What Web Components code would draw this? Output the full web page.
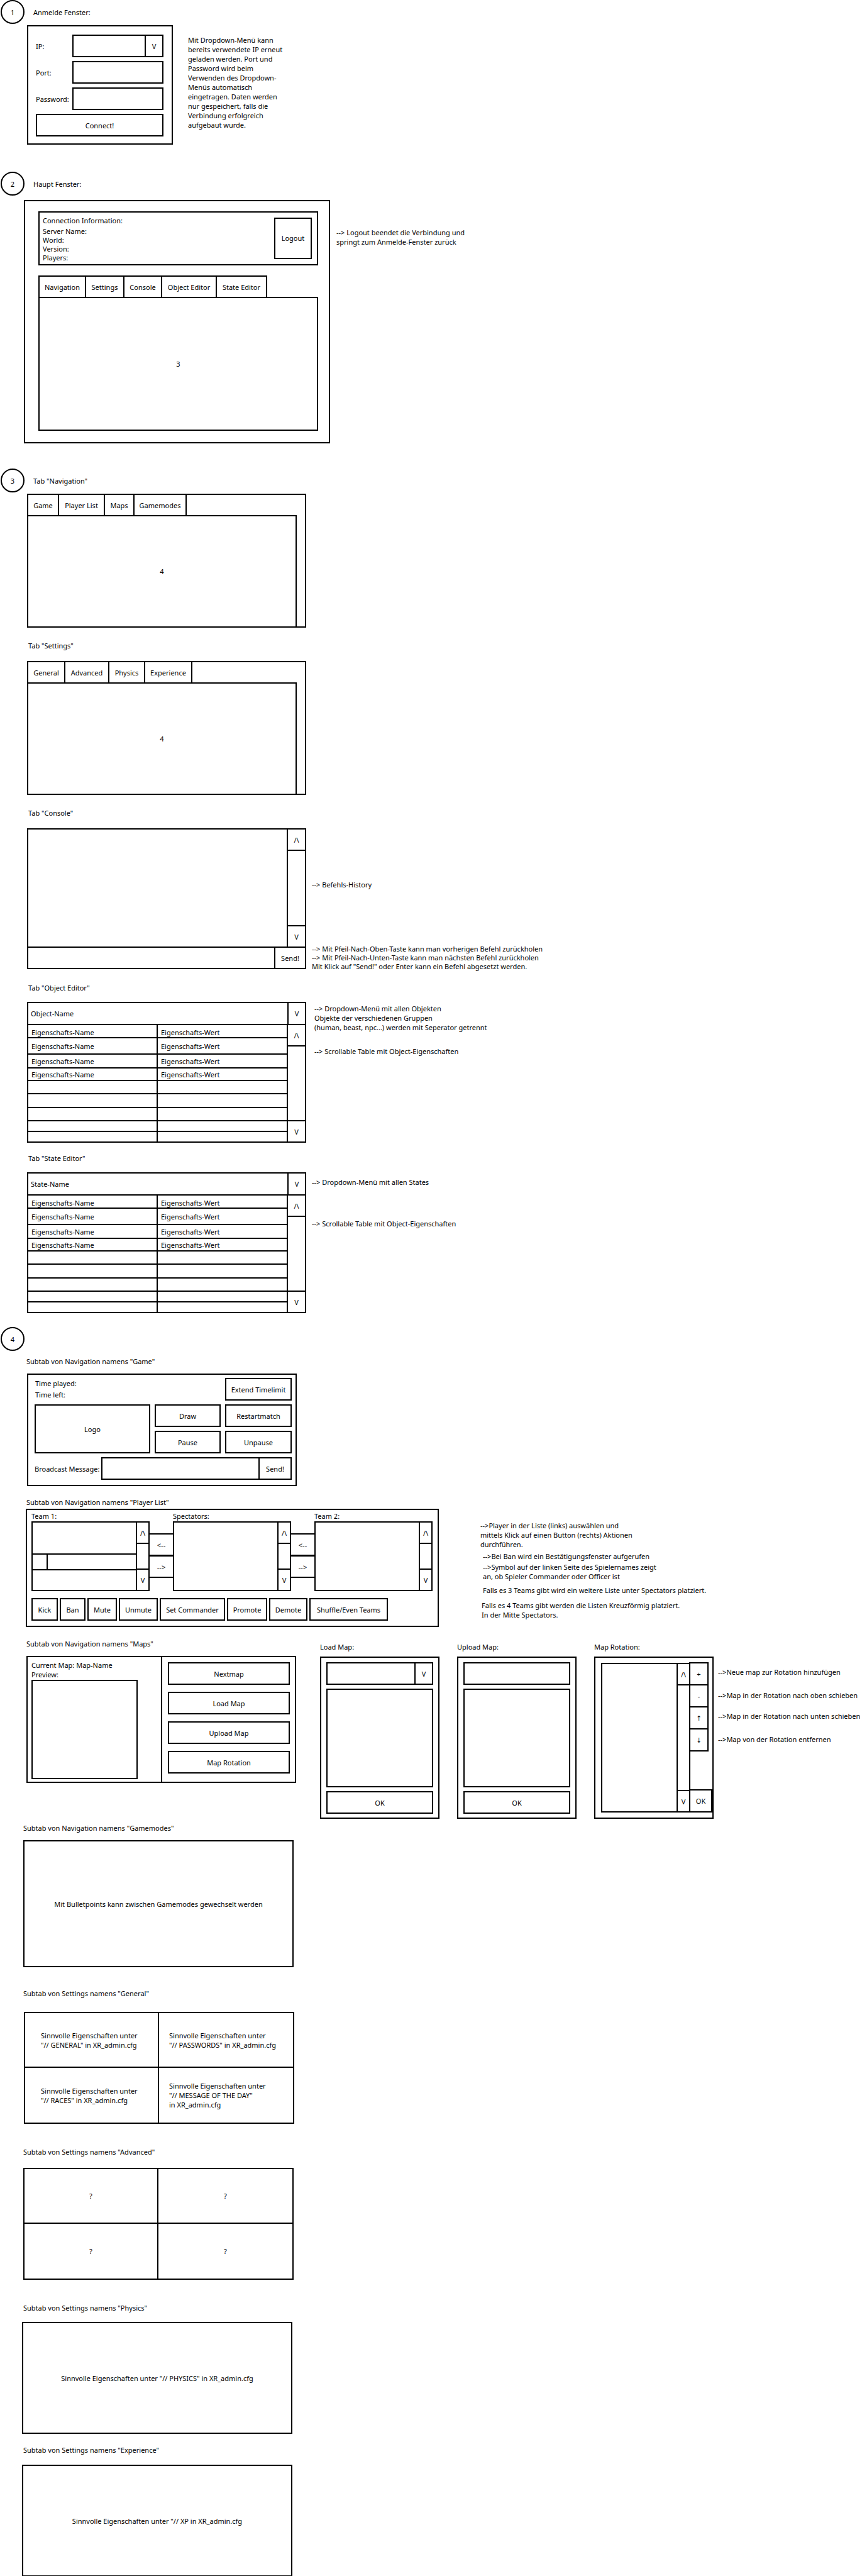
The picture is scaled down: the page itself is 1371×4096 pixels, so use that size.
<!DOCTYPE html>
<html lang="de">
<head>
<meta charset="utf-8">
<title>Admin-Tool Skizze</title>
<style>
  body { margin: 0; padding-bottom: 1px; background: #fff; color: #000;
         font: 11px/15px "Noto Sans", "DejaVu Sans Condensed", sans-serif; }
  .row { display: flex; align-items: flex-start; }
  .notes { display: flex; flex-direction: column; }

  #s2 { margin-top: 43px; }
  #s3 { margin-top: 40px; }
  #s4 { margin-top: 22px; }
  #login { margin: 2px 0 0 43px; gap: 24px; }
  #login .notes { padding-top: 16px; }
  #main { margin: 7px 0 0 38px; gap: 10px; }
  #main .notes { padding-top: 44px; }

  .tab { margin-left: 43px; }
  .tab > .row { gap: 9px; }
  .tab > wire-title { margin-left: 2px; }
  #navigation { margin-top: 2px; }
  #settings, #console { margin-top: 21px; }
  #settings > .row, #console > .row { margin-top: 17px; }
  #console .notes { padding-top: 82px; gap: 88px; }
  #object { margin-top: 19px; }
  #object > .row { margin-top: 15px; gap: 13px; }
  #object .notes { padding-top: 3px; gap: 23px; }
  #state { margin-top: 17px; }
  #state > .row { margin-top: 15px; }
  #state .notes { padding-top: 8px; gap: 51px; }

  .sub { margin-left: 42px; }
  #game { margin-top: 9px; }
  #game > game-tab { margin: 12px 0 0 1px; }
  #players { margin-top: 18px; }
  #players > .row { margin: 3px 0 0 -1px; gap: 66px; }
  #players .notes { padding-top: 19px; }
  .i2 { margin-left: 2px; }
  .i4 { margin-left: 4px; }
  #maps { margin-top: 19px; }
  #maps maps-tab { margin-top: 12px; }
  .dialog { margin: 5px 0 0 28px; }
  .dialog > :last-child { margin-top: 8px; }
  .dialog.first { margin-left: 38px; }
  #maps .notes { padding: 45px 0 0 7px; }

  .set { margin-left: 37px; }
  #gamemodes { margin-top: 7px; }
  #gamemodes wire-panel { margin-top: 12px; min-height: 202px; }
  #general { margin-top: 34px; --pad-a: 25px; --pad-b: 16px; }
  #general wire-quad { margin: 22px 0 0 1px; }
  #advanced { margin-top: 37px; }
  #advanced wire-quad { margin-top: 18px; }
  #physics { margin-top: 37px; }
  #physics wire-panel { margin: 15px 0 0 -2px; }
  #experience { margin-top: 18px; }
  #experience wire-panel { margin: 16px 0 0 -2px; }
</style>
</head>
<body>
<wire-step id="s1" number="1">Anmelde Fenster:</wire-step>
<div id="login" class="row">
  <login-window></login-window>
  <div class="notes"><wire-note>Mit Dropdown-Menü kann<br>bereits verwendete IP erneut<br>geladen werden. Port und<br>Password wird beim<br>Verwenden des Dropdown-<br>Menüs automatisch<br>eingetragen. Daten werden<br>nur gespeichert, falls die<br>Verbindung erfolgreich<br>aufgebaut wurde.</wire-note></div>
</div>

<wire-step id="s2" number="2">Haupt Fenster:</wire-step>
<div id="main" class="row">
  <main-window></main-window>
  <div class="notes"><wire-note>--&gt; Logout beendet die Verbindung und<br>springt zum Anmelde-Fenster zurück</wire-note></div>
</div>

<wire-step id="s3" number="3">Tab "Navigation"</wire-step>
<div id="navigation" class="tab"><tab-window tabs="Game:51,Player List:75,Maps:49,Gamemodes:85">4</tab-window></div>

<div id="settings" class="tab">
  <wire-title>Tab "Settings"</wire-title>
  <div class="row"><tab-window tabs="General:61,Advanced:72,Physics:59,Experience:77">4</tab-window></div>
</div>

<div id="console" class="tab">
  <wire-title>Tab "Console"</wire-title>
  <div class="row">
    <console-tab></console-tab>
    <div class="notes">
      <wire-note>--&gt; Befehls-History</wire-note>
      <wire-note dense>--&gt; Mit Pfeil-Nach-Oben-Taste kann man vorherigen Befehl zurückholen<br>--&gt; Mit Pfeil-Nach-Unten-Taste kann man nächsten Befehl zurückholen<br>Mit Klick auf "Send!" oder Enter kann ein Befehl abgesetzt werden.</wire-note>
    </div>
  </div>
</div>

<div id="object" class="tab">
  <wire-title>Tab "Object Editor"</wire-title>
  <div class="row">
    <property-editor name="Object-Name"></property-editor>
    <div class="notes">
      <wire-note>--&gt; Dropdown-Menü mit allen Objekten<br>Objekte der verschiedenen Gruppen<br>(human, beast, npc...) werden mit Seperator getrennt</wire-note>
      <wire-note>--&gt; Scrollable Table mit Object-Eigenschaften</wire-note>
    </div>
  </div>
</div>

<div id="state" class="tab">
  <wire-title>Tab "State Editor"</wire-title>
  <div class="row">
    <property-editor name="State-Name"></property-editor>
    <div class="notes">
      <wire-note>--&gt; Dropdown-Menü mit allen States</wire-note>
      <wire-note>--&gt; Scrollable Table mit Object-Eigenschaften</wire-note>
    </div>
  </div>
</div>

<wire-step id="s4" number="4"></wire-step>
<div id="game" class="sub">
  <wire-title>Subtab von Navigation namens "Game"</wire-title>
  <game-tab></game-tab>
</div>

<div id="players" class="sub">
  <wire-title>Subtab von Navigation namens "Player List"</wire-title>
  <div class="row">
    <players-tab></players-tab>
    <div class="notes">
      <wire-note>--&gt;Player in der Liste (links) auswählen und<br>mittels Klick auf einen Button (rechts) Aktionen<br>durchführen.</wire-note>
      <wire-note class="i4" style="margin-top:4px">--&gt;Bei Ban wird ein Bestätigungsfenster aufgerufen</wire-note>
      <wire-note class="i4" style="margin-top:2px">--&gt;Symbol auf der linken Seite des Spielernames zeigt<br>an, ob Spieler Commander oder Officer ist</wire-note>
      <wire-note class="i4" style="margin-top:7px">Falls es 3 Teams gibt wird ein weitere Liste unter Spectators platziert.</wire-note>
      <wire-note class="i2" style="margin-top:9px">Falls es 4 Teams gibt werden die Listen Kreuzförmig platziert.<br>In der Mitte Spectators.</wire-note>
    </div>
  </div>
</div>

<div id="maps" class="sub row">
  <div>
    <wire-title>Subtab von Navigation namens "Maps"</wire-title>
    <maps-tab></maps-tab>
  </div>
  <div class="dialog first"><wire-title>Load Map:</wire-title><map-dialog kind="select"></map-dialog></div>
  <div class="dialog"><wire-title>Upload Map:</wire-title><map-dialog kind="text"></map-dialog></div>
  <div class="dialog"><wire-title>Map Rotation:</wire-title><rotation-dialog></rotation-dialog></div>
  <div class="notes">
    <wire-note>--&gt;Neue map zur Rotation hinzufügen</wire-note>
    <wire-note style="margin-top:22px">--&gt;Map in der Rotation nach oben schieben</wire-note>
    <wire-note style="margin-top:18px">--&gt;Map in der Rotation nach unten schieben</wire-note>
    <wire-note style="margin-top:22px">--&gt;Map von der Rotation entfernen</wire-note>
  </div>
</div>

<div id="gamemodes" class="set">
  <wire-title>Subtab von Navigation namens "Gamemodes"</wire-title>
  <wire-panel>Mit Bulletpoints kann zwischen Gamemodes gewechselt werden</wire-panel>
</div>
<div id="general" class="set">
  <wire-title>Subtab von Settings namens "General"</wire-title>
  <wire-quad align="start">
    <span slot="a">Sinnvolle Eigenschaften unter<br>"// GENERAL" in XR_admin.cfg</span>
    <span slot="b">Sinnvolle Eigenschaften unter<br>"// PASSWORDS" in XR_admin.cfg</span>
    <span slot="c">Sinnvolle Eigenschaften unter<br>"// RACES" in XR_admin.cfg</span>
    <span slot="d">Sinnvolle Eigenschaften unter<br>"// MESSAGE OF THE DAY"<br>in XR_admin.cfg</span>
  </wire-quad>
</div>
<div id="advanced" class="set">
  <wire-title>Subtab von Settings namens "Advanced"</wire-title>
  <wire-quad>
    <span slot="a">?</span><span slot="b">?</span><span slot="c">?</span><span slot="d">?</span>
  </wire-quad>
</div>
<div id="physics" class="set">
  <wire-title>Subtab von Settings namens "Physics"</wire-title>
  <wire-panel>Sinnvolle Eigenschaften unter "// PHYSICS" in XR_admin.cfg</wire-panel>
</div>
<div id="experience" class="set">
  <wire-title>Subtab von Settings namens "Experience"</wire-title>
  <wire-panel>Sinnvolle Eigenschaften unter "// XP in XR_admin.cfg</wire-panel>
</div>

<script>
const BASE = `
  :host { display: block; box-sizing: border-box; max-width: 100%; }
  *, *::before, *::after { box-sizing: border-box; }
  button, input, select, textarea { font: inherit; color: inherit; background: #fff; border: 2px solid #000;
    border-radius: 0; margin: 0; padding: 0; min-width: 0; height: 36px; appearance: none; outline: 0; resize: none; display: block; }
  button { text-align: center; white-space: nowrap; }
  .frame { border: 2px solid #000; background: #fff; }
  .flex { display: flex; }
`;
function define(name, css, html) {
  customElements.define(name, class extends HTMLElement {
    constructor() {
      super();
      this.attachShadow({ mode: "open" });
    }
    connectedCallback() {
      const body = typeof html === "function" ? html(this) : html;
      const t = document.createElement("template");
      t.innerHTML = "<style>" + BASE + css + "</style>" + body;
      this.shadowRoot.replaceChildren(t.content.cloneNode(true));
    }
  });
}
/* "Label:width,Label:width" to a row of buttons */
function buttons(list, role) {
  return list.split(",").map(item => {
    const [text, width] = item.split(":");
    return `<button type="button"${role ? ` role="${role}"` : ""} style="flex:0 1 ${width}px">${text}</button>`;
  }).join("");
}

/* Text blocks */
define("wire-title", `:host { white-space: nowrap; }`, `<slot></slot>`);
define("wire-note", `:host { white-space: nowrap; } :host([dense]) { line-height: 14px; }`, `<slot></slot>`);
define("wire-step", `
  :host { display: flex; align-items: center; gap: 14px; padding-left: 1px; }
  b { font-weight: normal; width: 38px; height: 38px; border: 2px solid #000; border-radius: 50%;
      display: flex; align-items: center; justify-content: center; }`,
  el => `<b>${el.getAttribute("number")}</b><span><slot></slot></span>`);

/* Scroll bar with its two arrow buttons */
define("wire-scroll", `
  :host { display: flex; flex-direction: column; justify-content: space-between; width: 29px; border-left: 2px solid #000; flex: none; }
  :host([narrow]) { width: 20px; }
  button { height: 34px; border-width: 0 0 2px; width: 100%; }
  button + button { border-width: 2px 0 0; }`,
  `<button type="button">/\\</button><button type="button">V</button>`);

/* Drop-down with its V cell */
define("wire-select", `
  label { display: flex; height: 36px; border: 2px solid #000; }
  :host([bare]) label { border: 0; height: 33px; }
  select { flex: 1; height: auto; border: 0; padding-left: 4px; }
  span { width: 28px; border-left: 2px solid #000; display: flex; align-items: center; justify-content: center; }`,
  el => `<label><select aria-label="${el.getAttribute("label")}"><option>${el.getAttribute("value") || ""}</option></select><span>V</span></label>`);

define("wire-tabs", `
  :host { display: flex; }
  button + button { margin-left: -2px; }`,
  el => buttons(el.getAttribute("tabs"), "tab"));

define("wire-panel", `
  :host { display: flex; align-items: center; justify-content: center; border: 2px solid #000; width: 430px; min-height: 178px; }`,
  `<slot></slot>`);

define("wire-quad", `
  :host { display: grid; grid-template-columns: 1fr 1fr; grid-template-rows: 1fr 1fr; border: 2px solid #000; width: 430px; min-height: 178px; }
  div { display: flex; align-items: center; justify-content: center; }
  :host([align]) div { justify-content: flex-start; padding-left: var(--pad-a); }
  :host([align]) div:nth-of-type(even) { padding-left: var(--pad-b); }
  div:nth-of-type(odd) { border-right: 2px solid #000; }
  div:nth-of-type(-n+2) { border-bottom: 2px solid #000; }`,
  `<div><slot name="a"></slot></div><div><slot name="b"></slot></div><div><slot name="c"></slot></div><div><slot name="d"></slot></div>`);

/* 1: login */
define("login-window", `
  :host { width: 232px; }
  form { display: grid; grid-template-columns: 58px 1fr; gap: 6px 0; align-items: center; padding: 13px 13px 11px 12px; }
  input { width: 100%; padding: 0 4px; }
  button { grid-column: 1 / -1; }`,
  `<form class="frame">
    <span>IP:</span><wire-select label="IP"></wire-select>
    <label for="port">Port:</label><input id="port">
    <label for="pw">Password:</label><input id="pw" type="password">
    <button type="button">Connect!</button>
  </form>`);

/* 2: main window */
define("main-window", `
  :host { width: 487px; }
  .outer { padding: 16px 17px 18px 21px; }
  .info { display: flex; align-items: flex-start; justify-content: space-between; padding: 6px 8px 3px 5px; line-height: 14px; margin-bottom: 16px; }
  .info button { height: 66px; width: 60px; margin-top: 2px; }
  p { margin: 0 0 3px; }
  .area { margin-top: -2px; min-height: 213px; display: flex; align-items: center; justify-content: center; }`,
  `<div class="frame outer">
    <div class="frame info">
      <div><p>Connection Information:</p><div>Server Name:</div><div>World:</div><div>Version:</div><div>Players:</div></div>
      <button type="button">Logout</button>
    </div>
    <wire-tabs tabs="Navigation:76,Settings:63,Console:62,Object Editor:89,State Editor:82"></wire-tabs>
    <div class="frame area">3</div>
  </div>`);

/* 3: window with tabs along its top edge */
define("tab-window", `
  :host { width: 444px; }
  .outer { display: flex; flex-direction: column; }
  wire-tabs { margin: -2px 0 0 -2px; }
  .area { margin: -2px 13px -2px -2px; min-height: 179px; display: flex; align-items: center; justify-content: center; }`,
  el => `<div class="frame outer"><wire-tabs tabs="${el.getAttribute("tabs")}"></wire-tabs><div class="frame area"><slot></slot></div></div>`);

define("console-tab", `
  :host { width: 444px; }
  .out { display: flex; height: 186px; }
  textarea { flex: 1; height: auto; border: 0; }
  .in { display: flex; border-top: 2px solid #000; }
  .in input { flex: 1; border: 0; height: 32px; padding: 0 5px; }
  .in button { border-width: 0 0 0 2px; height: 32px; width: 49px; }`,
  `<div class="frame">
    <div class="out"><textarea readonly aria-label="Befehls-History"></textarea><wire-scroll></wire-scroll></div>
    <div class="in"><input aria-label="Befehl"><button type="button">Send!</button></div>
  </div>`);

define("property-editor", `
  :host { width: 444px; }
  .head { border-bottom: 2px solid #000; }
  table { flex: 1; border-spacing: 0; table-layout: fixed; }
  col:first-child { width: 206px; }
  td { padding: 0 0 0 5px; border-bottom: 2px solid #000; line-height: 15px; }
  td:first-child { border-right: 2px solid #000; }
  tr:first-child td { padding-top: 4px; }
  tr:last-child td { border-bottom: 0; }`,
  el => {
    const heights = [21, 26, 22, 20, 21, 22, 21, 17, 15];
    const rows = heights.map((h, i) => `<tr style="height:${h}px"><td>${i < 4 ? "Eigenschafts-Name" : ""}</td><td>${i < 4 ? "Eigenschafts-Wert" : ""}</td></tr>`).join("");
    const n = el.getAttribute("name");
    return `<div class="frame"><div class="head"><wire-select bare label="${n}" value="${n}"></wire-select></div>
      <div class="flex"><table><colgroup><col><col></colgroup><tbody>${rows}</tbody></table><wire-scroll></wire-scroll></div></div>`;
  });

/* 4: sub tabs */
define("game-tab", `
  :host { width: 429px; }
  .grid { display: grid; grid-template-columns: 184fr 105fr 106fr; gap: 6px 7px; padding: 5px 6px 8px 10px; }
  .time { grid-column: 1 / 3; line-height: 18px; padding-left: 1px; }
  .logo { grid-row: 2 / 4; display: flex; align-items: center; justify-content: center; }
  .cast { grid-column: 1 / -1; display: flex; align-items: center; }
  label { width: 106px; white-space: nowrap; flex: none; }
  input { flex: 1; padding: 0 4px; }
  .cast button { width: 53px; margin-left: -2px; }`,
  `<div class="frame grid">
    <div class="time"><div>Time played:</div><div>Time left:</div></div><button type="button">Extend Timelimit</button>
    <div class="frame logo">Logo</div><button type="button">Draw</button><button type="button">Restartmatch</button>
    <button type="button">Pause</button><button type="button">Unpause</button>
    <div class="cast"><label for="m">Broadcast Message:</label><input id="m"><button type="button">Send!</button></div>
  </div>`);

define("team-list", `
  :host { width: 188px; flex: none; }
  .list { display: flex; height: 111px; margin-top: 1px; }
  .items { flex: 1; }
  .item { height: 27px; margin-top: 49px; border: solid #000; border-width: 2px 0; }
  i { display: block; height: 100%; width: 24px; border-right: 2px solid #000; }`,
  el => `<div><slot></slot></div><div class="frame list"><div class="items">${el.hasAttribute("entry") ? '<div class="item"><i></i></div>' : ""}</div><wire-scroll narrow></wire-scroll></div>`);

define("move-buttons", `
  :host { flex: 1; margin: 35px -2px 0; }
  button { width: 100%; }
  button + button { margin-top: -1px; }`,
  `<button type="button">&lt;--</button><button type="button">--&gt;</button>`);

define("players-tab", `
  :host { width: 657px; }
  .outer { padding: 2px 8px 8px 7px; }
  .actions { display: flex; gap: 3px; margin-top: 11px; }`,
  `<div class="frame outer">
    <div class="flex">
      <team-list entry>Team 1:</team-list><move-buttons></move-buttons>
      <team-list>Spectators:</team-list><move-buttons></move-buttons>
      <team-list>Team 2:</team-list>
    </div>
    <div class="actions">${buttons("Kick:42,Ban:41,Mute:47,Unmute:62,Set Commander:104,Promote:64,Demote:61,Shuffle/Even Teams:125")}</div>
  </div>`);

define("maps-tab", `
  :host { width: 429px; }
  .outer { display: flex; }
  .left { width: 214px; border-right: 2px solid #000; padding: 5px 0 4px 6px; }
  .preview { width: 169px; height: 158px; margin-top: 1px; }
  .right { flex: 1; display: flex; flex-direction: column; gap: 11px; padding: 8px 8px 0 9px; }`,
  `<div class="frame outer">
    <div class="left"><div>Current Map: Map-Name</div><div>Preview:</div><div class="frame preview"></div></div>
    <div class="right"><button type="button">Nextmap</button><button type="button">Load Map</button><button type="button">Upload Map</button><button type="button">Map Rotation</button></div>
  </div>`);

define("map-dialog", `
  :host { width: 190px; }
  .outer { display: flex; flex-direction: column; gap: 6px; padding: 7px 8px 6px; }
  .list { height: 157px; }`,
  el => `<div class="frame outer">${el.getAttribute("kind") === "select" ? '<wire-select label="Map"></wire-select>' : '<input aria-label="Map">'}
    <div class="frame list"></div><button type="button">OK</button></div>`);

define("rotation-dialog", `
  :host { width: 190px; }
  .outer { display: flex; padding: 8px 0 8px 9px; height: 258px; }
  .list { display: flex; justify-content: flex-end; width: 144px; }
  .side { display: flex; flex-direction: column; align-items: flex-start; margin: -1px 0 0 -2px; }
  .side button { width: 31px; height: 37px; margin-bottom: -2px; }
  .side button:last-child { width: 37px; margin: auto 0 0; }`,
  `<div class="frame outer">
    <div class="frame list"><wire-scroll narrow></wire-scroll></div>
    <div class="side"><button type="button">+</button><button type="button">-</button><button type="button">↑</button><button type="button">↓</button><button type="button">OK</button></div>
  </div>`);
</script>
</body>
</html>
